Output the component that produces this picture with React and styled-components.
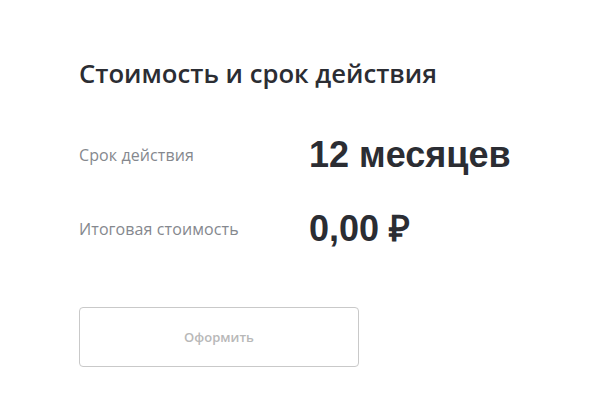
import React from "react";
import styled, {createGlobalStyle} from "styled-components";

const GlobalStyle = createGlobalStyle`
  html, body {
    margin: 0;
    padding: 0;
    background: #fff;
  }
`

const Section = styled.section`
  width: 604px;
  height: 419px;
  box-sizing: border-box;
  padding: 58px 0 0 79px;
  font-family: "Open Sans", "Noto Sans", sans-serif;
  color: #2b2d33;
`

const Title = styled.h2`
  margin: 0;
  font-size: 25.7px;
  font-weight: 600;
  line-height: 32px;
  color: #2b2d33;
`

const Rows = styled.div`
  margin-top: 45px;
  display: flex;
  flex-direction: column;
  gap: 34px;
`

const Row = styled.div`
  display: grid;
  grid-template-columns: 230px 1fr;
  align-items: center;
  height: 40px;
`

const Label = styled.span`
  font-size: 16px;
  letter-spacing: 0.1px;
  color: #85888e;
`

const Value = styled.span`
  font-family: "Liberation Sans", Arial, sans-serif;
  font-weight: 700;
  font-size: 36px;
  color: #2b2d33;
  line-height: 40px;
`

const Button = styled.button`
  margin-top: 58px;
  width: 280px;
  height: 60px;
  border: 1px solid #c9c9c9;
  border-radius: 4px;
  background: #fff;
  font-family: "Open Sans", sans-serif;
  font-size: 13px;
  font-weight: 600;
  color: #b8b8b8;
  cursor: default;
`

export default function App() {
  return (
    <>
      <GlobalStyle/>
      <Section>
        <Title>Стоимость и срок действия</Title>
        <Rows>
          <Row>
            <Label>Срок действия</Label>
            <Value>12 месяцев</Value>
          </Row>
          <Row>
            <Label>Итоговая стоимость</Label>
            <Value>0,00 ₽</Value>
          </Row>
        </Rows>
        <Button type="button" disabled>Оформить</Button>
      </Section>
    </>
  )
}
